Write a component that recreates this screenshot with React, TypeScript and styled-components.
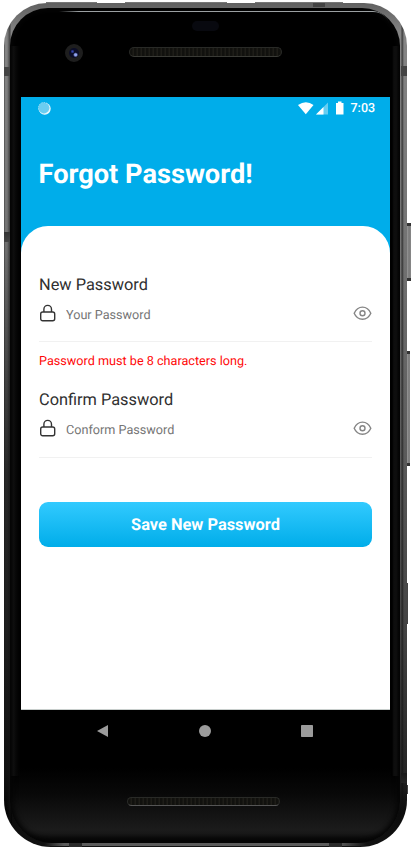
import React from "react";
import styled, { createGlobalStyle } from "styled-components";

const GlobalStyle = createGlobalStyle`
  *, *::before, *::after { box-sizing: border-box; }
  body {
    margin: 0;
    background: #fff;
    font-family: Roboto, "Noto Sans", sans-serif;
    text-rendering: geometricPrecision;
  }
  h1, label, p { margin: 0; }
  input, button { font: inherit; border: 0; margin: 0; padding: 0; text-rendering: inherit; }
`;

const Stage = styled.main`
  display: grid;
  grid-template-columns: 403px 4px;
  grid-template-rows: 1px 844px;
  width: 411px;
  height: 854px;
  padding: 2px 0 0 4px;
  overflow: hidden;
`;

const TopRail = styled.div`
  grid-column: 1 / -1;
  display: flex;
  gap: 28px;
  padding-left: 42px;
`;

const TopEdge = styled.i<{ $width: number }>`
  width: ${(p) => p.$width}px;
  height: 1px;
  background: #777;
`;

const Frame = styled.div`
  height: 844px;
  padding: 5px 7px 4px 6px;
  border-radius: 43px 43px 47px 47px;
  background:
    linear-gradient(#444, #444) 0 64px / 6px 9px no-repeat,
    linear-gradient(#333, #444) 0 229px / 6px 10px no-repeat,
    linear-gradient(#444, #444) 397px 63px / 6px 10px no-repeat,
    linear-gradient(#181818, #242424) 397px 770px / 6px 10px no-repeat,
    linear-gradient(#444, #444) 309px 0 / 12px 4px no-repeat,
    linear-gradient(#2a2a2a, #2a2a2a) 65px 840px / 13px 4px no-repeat,
    linear-gradient(#2a2a2a, #2a2a2a) 325px 840px / 13px 4px no-repeat,
    linear-gradient(90deg, transparent, #5b5b5b 20px, #5b5b5b 295px, transparent) 40px 840px / 323px 3px no-repeat,
    linear-gradient(90deg, rgba(20,20,20,.6) 0, transparent 1px, transparent 3px, rgba(20,20,20,.6) 6px, transparent 7px, transparent 397px, rgba(15,15,15,.65) 398px, transparent 400px),
    linear-gradient(transparent, rgba(0,0,0,.55) 240px, rgba(0,0,0,.55)) 0 230px / 8px 614px no-repeat,
    linear-gradient(#606060 0, #858585 30px, #737373 240px, #5d5d5d 430px, #424242 630px, #242424 770px, #0b0b0b 810px, #111 842px);
`;

const SideRail = styled.div`
  display: flex;
  flex-direction: column;
  padding-top: 220px;
`;

const SideButton = styled.i<{ $height: number; $width: number; $gap: number }>`
  width: ${(p) => p.$width}px;
  height: ${(p) => p.$height}px;
  margin-bottom: ${(p) => p.$gap}px;
  border: solid #333;
  border-width: 3px 0;
  background: linear-gradient(90deg, #999, #777 2px, #8a8a8a);
`;

const DarkButton = styled.i<{ $height: number; $gap?: number }>`
  width: 1px;
  height: ${(p) => p.$height}px;
  margin-bottom: ${(p) => p.$gap ?? 0}px;
  background: #444;
`;

const Bezel = styled.div`
  position: relative;
  height: 100%;
  padding-left: 11px;
  border-radius: 38px 38px 42px 42px;
  overflow: hidden;
  background:
    linear-gradient(90deg, #090909, #171717 3px, #080808 6px, rgba(0,0,0,0) 10px, rgba(0,0,0,0) 380px, #000 382px, #101010 384px, #151515 387px, #000 390px) 0 38px / 100% 730px no-repeat,
    linear-gradient(#000 0, #000 760px, #080808 785px, #1b1b1b 822px, #171717 826px, #050505 833px);
  box-shadow: inset 0 0 5px 3px #050505;
`;

const TopShine = styled.i`
  position: absolute;
  left: 49px;
  right: 10px;
  top: 3px;
  height: 17px;
  border-top: 1px solid #9ba0a2;
  border-radius: 0 34px 0 0;
  mask-image: linear-gradient(90deg, transparent, #000 20px, #000 315px, transparent);
`;

const TopHardware = styled.div`
  height: 89px;
  display: grid;
  grid-template-columns: 108px 153px;
  grid-template-rows: 24px 1fr;
  padding-top: 13px;
`;

const Sensor = styled.div`
  grid-column: 2;
  width: 27px;
  height: 10px;
  margin-left: 63px;
  border-radius: 5px;
  background: #08090f;
`;

const Camera = styled.div`
  grid-row: 2;
  width: 18px;
  height: 18px;
  margin-top: -1px;
  margin-left: 44px;
  border: 4px solid #1e1e1e;
  border-radius: 50%;
  background:
    radial-gradient(circle at 66% 68%, #91a4f3 0 1px, transparent 2.5px),
    radial-gradient(circle at 35% 35%, #3445ac 0 .5px, transparent 2px),
    #0b0d28;
`;

const Speaker = styled.div<{ $bottom?: boolean }>`
  width: 153px;
  height: ${(p) => (p.$bottom ? 9 : 10)}px;
  margin-top: ${(p) => (p.$bottom ? 0 : 2)}px;
  border: 1px solid #292a27;
  border-bottom-color: ${(p) => (p.$bottom ? "#555" : "#3a3b36")};
  border-radius: 5px;
  background: repeating-linear-gradient(90deg, #11110e 0 2px, #1e1d18 3px 4px);
`;

const Screen = styled.section`
  width: 369px;
  height: 613px;
  display: flex;
  flex-direction: column;
  background: #00adea;
  border-bottom: 1px solid #c8cecc;
`;

const StatusBar = styled.div`
  height: 22px;
  display: flex;
  align-items: center;
  padding: 0 14.5px 0 17px;
  color: #fff;
`;

const StatusIcons = styled.svg`
  display: block;
  margin-left: auto;
`;

const Clock = styled.span`
  width: 25px;
  margin-left: 5.5px;
  font-size: 12.5px;
  font-weight: 500;
  white-space: nowrap;
`;

const Heading = styled.h1`
  height: 107px;
  padding: 39px 17.5px 0;
  color: #fff;
  font-size: 27.2px;
  line-height: 32px;
  font-weight: 700;
  white-space: nowrap;
`;

const Form = styled.form`
  flex: 1;
  padding: 49px 18px 0;
  border-radius: 27px 27px 0 0;
  background: #fff;
`;

const Field = styled.div<{ $height: number }>`
  height: ${(p) => p.$height}px;
  border-bottom: 1px solid #f1f1f1;
`;

const Label = styled.label`
  display: block;
  height: 20px;
  color: #303030;
  font-size: 16.35px;
  line-height: 20px;
`;

const InputRow = styled.div`
  display: flex;
  align-items: center;
  height: 36px;
`;

const Input = styled.input`
  flex: 1;
  min-width: 0;
  height: 24px;
  margin-left: 9px;
  padding-top: 4px;
  background: transparent;
  color: #333;
  font-size: 12.65px;
  outline: none;
  &::placeholder { color: #757575; opacity: 1; }
`;

const ErrorText = styled.p`
  height: 48px;
  padding-top: 11px;
  color: #ff0808;
  font-size: 12.65px;
  line-height: 17px;
`;

const SaveButton = styled.button`
  display: block;
  width: 333px;
  height: 45px;
  margin-top: 44px;
  padding-top: 2px;
  border-radius: 9px;
  color: #fff;
  font-size: 16.4px;
  font-weight: 700;
  background: linear-gradient(#32caff, #00ade9);
`;

const Navigation = styled.nav`
  width: 368px;
  height: 87px;
  display: flex;
  justify-content: center;
  padding-top: 14px;
`;

const BottomSpeaker = styled.div`
  padding-left: 106px;
`;

const LockIcon = () => (
  <svg width="18" height="19" viewBox="0 0 18 19" fill="none" stroke="#333" strokeWidth="1.4">
    <rect x="1.7" y="8" width="14" height="8.8" rx="2" />
    <path d="M4.900 8V5.200a3.800 3.800 0 0 1 7.600 0V8" />
  </svg>
);

const EyeIcon = () => (
  <svg width="19" height="16" viewBox="0 0 19 16" fill="none" stroke="#858585" strokeWidth="1.4">
    <path d="M1.200 8.200c1.800-4.100 4.800-6.100 8.300-6.100s6.500 2 8.300 6.100c-1.800 4.100-4.800 6.100-8.300 6.100s-6.500-2-8.300-6.100Z" />
    <circle cx="9.500" cy="8.200" r="2.500" />
  </svg>
);

type PasswordFieldProps = { id: string; label: string; placeholder: string; height: number };

const PasswordField = ({ id, label, placeholder, height }: PasswordFieldProps) => (
  <Field $height={height}>
    <Label htmlFor={id}>{label}</Label>
    <InputRow>
      <LockIcon />
      <Input id={id} type="password" placeholder={placeholder} />
      <EyeIcon />
    </InputRow>
  </Field>
);

export default function App() {
  return (
    <>
      <GlobalStyle />
      <Stage>
        <TopRail>
          <TopEdge $width={51} />
          <TopEdge $width={102} />
          <TopEdge $width={88} />
        </TopRail>
        <Frame>
          <Bezel>
            <TopShine />
            <TopHardware>
              <Sensor />
              <Camera />
              <Speaker />
            </TopHardware>
            <Screen>
              <StatusBar>
                <svg width="13" height="13" viewBox="0 0 13 13">
                  <circle cx="6.700" cy="6.700" r="6" fill="#f4fbfd" />
                  <circle cx="5.900" cy="5.900" r="5.500" fill="#6acdf1" stroke="#a7e1f5" strokeWidth=".8" strokeDasharray="1.500 1" />
                </svg>
                <StatusIcons width="47" height="15" viewBox="0 0 47 15">
                  <path d="M0 4Q8 -1.500 15.500 4L7.800 13.300Z" fill="#fff" />
                  <path d="M18 13.500 30 1.500v12Z" fill="#66cef2" />
                  <path d="m18 13.500 7.500-7.500v7.500Z" fill="#fff" />
                  <path d="M40 .5h3.500v1.500h2v11.500h-7.500V2h2Z" fill="#fff" />
                </StatusIcons>
                <Clock>7:03</Clock>
              </StatusBar>
              <Heading>Forgot Password!</Heading>
              <Form onSubmit={(e) => e.preventDefault()}>
                <PasswordField id="new" label="New Password" placeholder="Your Password" height={67} />
                <ErrorText>Password must be 8 characters long.</ErrorText>
                <PasswordField id="confirm" label="Confirm Password" placeholder="Conform Password" height={68} />
                <SaveButton type="submit">Save New Password</SaveButton>
              </Form>
            </Screen>
            <Navigation>
              <svg width="218" height="14" viewBox="0 0 218 14" fill="#9b9b9b">
                <path d="M1 7 12 1v12Z" />
                <circle cx="109" cy="7" r="6" />
                <rect x="205" y="1" width="12" height="12" rx=".7" />
              </svg>
            </Navigation>
            <BottomSpeaker><Speaker $bottom /></BottomSpeaker>
          </Bezel>
        </Frame>
        <SideRail>
          <SideButton $width={4} $height={58} $gap={70} />
          <SideButton $width={3} $height={115} $gap={117} />
          <DarkButton $height={41} $gap={161} />
          <DarkButton $height={9} />
        </SideRail>
      </Stage>
    </>
  );
}
